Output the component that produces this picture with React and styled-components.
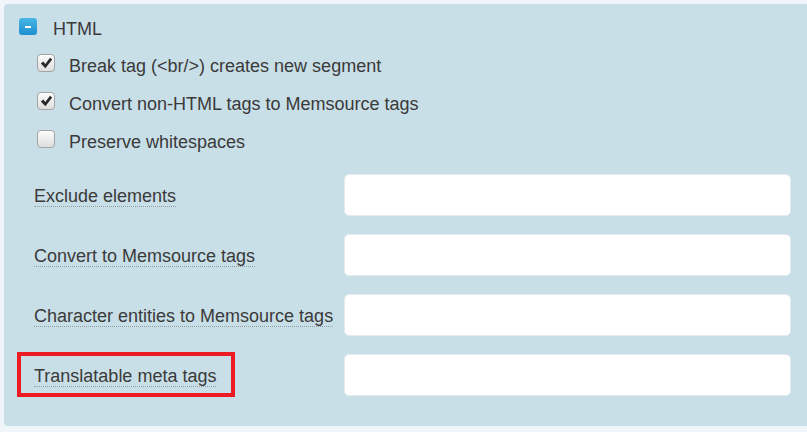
import React from "react";
import styled, { createGlobalStyle } from "styled-components";

const GlobalStyle = createGlobalStyle`
  html, body {
    margin: 0;
    padding: 0;
    background: #f0f5f9;
    overflow: hidden;
  }
  body {
    font-family: "Liberation Sans", Arial, sans-serif;
    color: #3a3a3a;
  }
`;

const Panel = styled.section`
  margin: 4px 0 0 4px;
  width: 830px;
  height: 422px;
  box-sizing: border-box;
  padding: 14px 0 0 15px;
  background: #c9dfe7;
  border-radius: 4px;
`;

const Header = styled.div`
  display: flex;
  align-items: flex-start;
  gap: 16px;
`;

const Toggle = styled.button`
  width: 18px;
  height: 17px;
  padding: 0;
  border: none;
  border-radius: 3px;
  background: linear-gradient(#48b6e6, #1d8fd0);
  display: flex;
  align-items: center;
  justify-content: center;
  cursor: pointer;
  &::before {
    content: "";
    width: 6px;
    height: 2px;
    background: #fff;
  }
`;

const Title = styled.span`
  margin-top: 1px;
  font-size: 18px;
  line-height: 20px;
  color: #3a3a3a;
`;

const CheckList = styled.div`
  margin: 15px 0 0 18px;
`;

const CheckRow = styled.label`
  display: flex;
  align-items: flex-start;
  height: 38px;
  cursor: pointer;
`;

const Box = styled.span`
  width: 18px;
  height: 18px;
  box-sizing: border-box;
  border: 1px solid #a3a3a3;
  border-radius: 4px;
  background: linear-gradient(#fcfcfc, #dedede);
  box-shadow: inset 0 1px 1px rgba(255, 255, 255, 0.8);
  display: flex;
  align-items: center;
  justify-content: center;
`;

const CheckText = styled.span`
  margin: 2px 0 0 14px;
  font-size: 18px;
  line-height: 20px;
  color: #3a3a3a;
`;

const Form = styled.div`
  margin: 6px 0 0 15px;
  display: grid;
  grid-template-columns: 310px 447px;
  grid-auto-rows: 42px;
  row-gap: 18px;
`;

const LabelCell = styled.div`
  align-self: start;
  margin-top: 12px;
`;

const FieldLabel = styled.span`
  position: relative;
  display: inline-block;
  font-size: 18px;
  line-height: 20px;
  color: #3a3a3a;
  border-bottom: 1px dotted #8f9ea4;

  ${(p) =>
    p.$highlight &&
    `
    &::after {
      content: "";
      position: absolute;
      top: -14px;
      left: -17px;
      right: -19px;
      bottom: -11px;
      border: 4px solid #ed1c24;
    }
  `}
`;

const TextInput = styled.input`
  box-sizing: border-box;
  width: 100%;
  height: 42px;
  border: 1px solid #e4ecef;
  border-radius: 5px;
  background: #fff;
  outline: none;
  padding: 0 10px;
  font-family: inherit;
  font-size: 16px;
`;

const Check = () => (
  <svg width="13" height="12" viewBox="0 0 13 12">
    <path
      d="M0.8 6.6 L3.4 4.6 L5.3 7 L10 0.8 L12.2 2.6 L5.4 11.2 Z"
      fill="#2a2a2a"
    />
  </svg>
);

const options = [
  { text: "Break tag (<br/>) creates new segment", checked: true },
  { text: "Convert non-HTML tags to Memsource tags", checked: true },
  { text: "Preserve whitespaces", checked: false },
];

const fields = [
  { label: "Exclude elements" },
  { label: "Convert to Memsource tags" },
  { label: "Character entities to Memsource tags" },
  { label: "Translatable meta tags", highlight: true },
];

export default function App() {
  return (
    <>
      <GlobalStyle />
      <Panel>
        <Header>
          <Toggle aria-label="collapse" />
          <Title>HTML</Title>
        </Header>
        <CheckList>
          {options.map((o) => (
            <CheckRow key={o.text}>
              <Box>{o.checked && <Check />}</Box>
              <CheckText>{o.text}</CheckText>
            </CheckRow>
          ))}
        </CheckList>
        <Form>
          {fields.map((f) => (
            <React.Fragment key={f.label}>
              <LabelCell>
                <FieldLabel $highlight={f.highlight}>{f.label}</FieldLabel>
              </LabelCell>
              <TextInput type="text" />
            </React.Fragment>
          ))}
        </Form>
      </Panel>
    </>
  );
}
